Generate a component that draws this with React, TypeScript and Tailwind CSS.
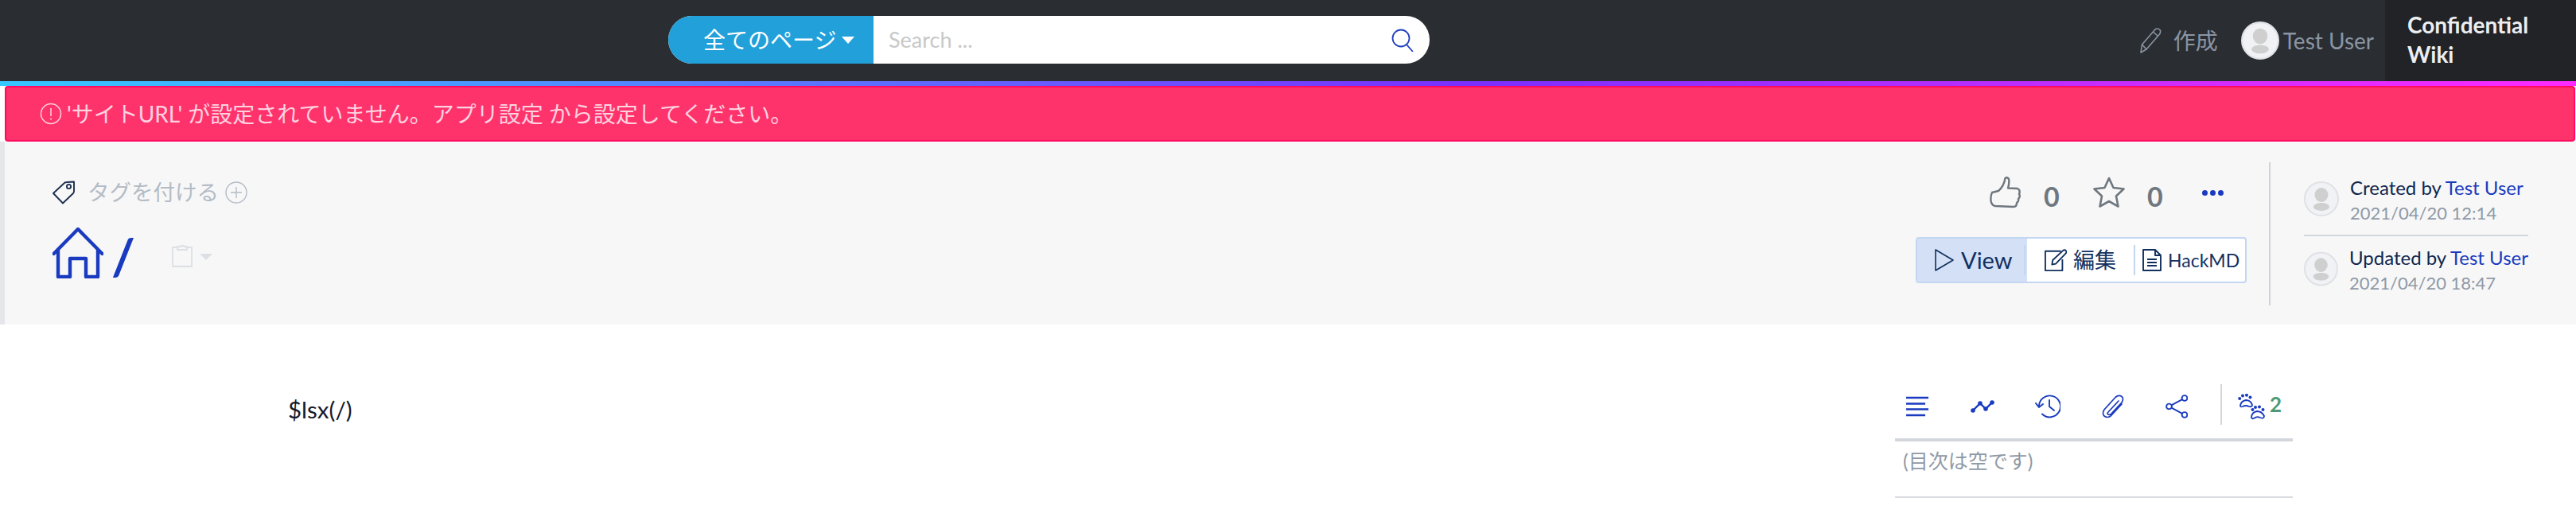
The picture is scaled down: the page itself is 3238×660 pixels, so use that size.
import React from "react";

const font = { fontFamily: "Lato, 'Noto Sans CJK JP', sans-serif" };

function Avatar({ className }: { className: string }) {
  return (
    <svg viewBox="0 0 44 44" className={className}>
      <circle cx="22" cy="22" r="21" fill="#f1f2f5" stroke="#dfe1e5" strokeWidth="2" />
      <ellipse cx="22" cy="17" rx="8.5" ry="9" fill="#cfcfcf" />
      <ellipse cx="22" cy="32" rx="10" ry="5" fill="#cfcfcf" />
    </svg>
  );
}

export default function App() {
  return (
    <div className="w-[3238px] h-[660px] overflow-hidden bg-white" style={font}>
      <nav className="h-[102px] bg-[#2a2d32] flex items-stretch">
        <div className="ml-[840px] mt-[20px] h-[60px] w-[957px] flex rounded-full overflow-hidden bg-white">
          <div className="w-[258px] bg-[#22a0d9] text-white text-[28px] flex items-center pl-[44px] gap-[7px] shrink-0 whitespace-nowrap">
            全てのページ
            <span className="w-0 h-0 border-x-[8px] border-t-[9px] border-x-transparent border-t-white"></span>
          </div>
          <div className="flex-1 flex items-center pl-[19px] pr-[20px] text-[27px] text-[#c8c8c8]">
            <span>Search ...</span>
            <svg viewBox="0 0 28 29" className="ml-auto w-[28px] h-[29px]" fill="none" stroke="#1f3fbf" strokeWidth="1.8">
              <circle cx="12" cy="12" r="10.5" />
              <path d="M19 20 L27 29" />
            </svg>
          </div>
        </div>
        <div className="ml-auto flex items-center text-[#8a95a3] text-[28px]">
          <svg viewBox="0 0 28 34" className="w-[28px] h-[34px] mr-[15px]" fill="none" stroke="#8a95a3" strokeWidth="1.6" strokeLinejoin="round">
            <path d="M2 32 L3.5 22 L20 3 Q23 0.8 26 3.5 Q27.5 6 25.5 9 L9 28 Z M3.5 22 L9 28 M17.5 6 L23.5 11.5" />
          </svg>
          <span>作成</span>
          <Avatar className="w-[48px] h-[48px] ml-[29px]" />
          <span className="ml-[5px]">Test User</span>
        </div>
        <div className="ml-[14px] w-[240px] bg-[#212327] text-[#eceef1] font-bold text-[28px] leading-[37px] pl-[28px] pt-[13px]">
          Confidential<br />Wiki
        </div>
      </nav>
      <div className="h-[6px] bg-[linear-gradient(90deg,#36c8ff_0%,#7a2fff_57%,#ff2aff_100%)]"></div>
      <div className="ml-[6px] mr-[1px] h-[70px] bg-[#ff336b] border-2 border-[#ff0a5e] rounded-[4px] flex items-center pl-[42px] text-[#ffd2e0] text-[28px] whitespace-nowrap">
        <svg viewBox="0 0 28 28" className="w-[28px] h-[28px] mr-[6px]" fill="none" stroke="#ffd2e0" strokeWidth="1.5">
          <circle cx="14" cy="14" r="12.5" />
          <path d="M14 7 V17 M14 19.5 V21.5" />
        </svg>
        <span>'サイトURL' が設定されていません。アプリ設定 から設定してください。</span>
      </div>

      <header className="h-[230px] bg-[#f7f7f7] border-l-[6px] border-[#e4e6ea] flex">
        <div className="pl-[60px] pt-[48px]">
          <div className="flex items-center h-[32px] text-[#b4bcc6] text-[27.5px]">
            <svg viewBox="0 0 28 30" className="w-[28px] h-[30px] mr-[16px]" fill="none" stroke="#1c2f50" strokeWidth="1.9" strokeLinejoin="round">
              <path d="M1 16 L15 3 Q16 2 18 2 L27 1.5 L27 13 Q27 15 26 16 L13 28.5 Z" />
              <circle cx="20.5" cy="7.5" r="2.6" />
            </svg>
            <span>タグを付ける</span>
            <svg viewBox="0 0 28 28" className="w-[28px] h-[28px] ml-[8px]" fill="none" stroke="#b4bcc6" strokeWidth="1.4">
              <circle cx="14" cy="14" r="13" />
              <path d="M14 7 V21 M7 14 H21" />
            </svg>
          </div>
          <div className="flex items-start mt-[28px]">
            <svg viewBox="0 0 64 64" className="w-[64px] h-[64px]" fill="none" stroke="#1a3bbf" strokeWidth="4.4" strokeLinecap="round" strokeLinejoin="round">
              <path d="M1.5 33 L32 2 L62.5 33 M7 28 V62 H22 V39 H42 V62 H57 V28" />
            </svg>
            <span className="text-[#1a3bbf] text-[64px] font-bold leading-[80px] ml-[10px] w-[30px] -mt-[4px]">/</span>
            <svg viewBox="0 0 26 28" className="w-[26px] h-[28px] ml-[46px] mt-[22px]" fill="none" stroke="#dcdfe4" strokeWidth="1.8">
              <path d="M7 3 H1 V27 H25 V3 H19 M7 6 V2 H11 L12 1 H15 L16 2 H19 V6 Z" />
            </svg>
            <span className="ml-[9px] mt-[33px] w-0 h-0 border-x-[8px] border-t-[8px] border-x-transparent border-t-[#dcdfe4]"></span>
          </div>
        </div>

        <div className="ml-auto flex flex-col items-end">
          <div className="flex items-center h-[40px] mt-[44px] mr-[29px] text-[#6f777f] font-bold text-[34px]">
            <svg viewBox="0 0 40 40" className="w-[40px] h-[40px]" fill="none" stroke="#6f777f" strokeWidth="2.4" strokeLinejoin="round">
              <path d="M3 20 Q1 24 1.5 30 Q2 36 7 37 L30 38 Q34 38 34 33 Q37 31 36 28 Q39 25 37 22 Q39 17 35 15 L23 14.5 Q25 8 24 3 Q22 0 19.5 2 Q18 12 11 18 Q7 19 3 20 Z" />
            </svg>
            <span className="ml-[28px] w-[20px] mt-[8px]">0</span>
            <svg viewBox="0 0 40 40" className="w-[40px] h-[40px] ml-[42px]" fill="none" stroke="#6f777f" strokeWidth="2.6" strokeLinejoin="round">
              <path d="M20 2 L25.5 14 L38.5 15.5 L29 24.5 L31.5 37.5 L20 31 L8.5 37.5 L11 24.5 L1.5 15.5 L14.5 14 Z" />
            </svg>
            <span className="ml-[28px] w-[20px] mt-[8px]">0</span>
            <span className="ml-[49px] flex gap-[3px]">
              <span className="w-[7px] h-[7px] rounded-full bg-[#1a3bbf]"></span>
              <span className="w-[7px] h-[7px] rounded-full bg-[#1a3bbf]"></span>
              <span className="w-[7px] h-[7px] rounded-full bg-[#1a3bbf]"></span>
            </span>
          </div>
          <div className="mt-[36px] w-[416px] h-[58px] flex items-center border-2 border-[#c3d6f2] rounded-[4px] bg-white text-[#11305f] overflow-hidden">
            <div className="w-[138px] h-full bg-[#d3e0f5] flex items-center pl-[22px] text-[29px] shrink-0">
              <svg viewBox="0 0 24 30" className="w-[24px] h-[30px] mr-[9px]" fill="none" stroke="#11305f" strokeWidth="1.6" strokeLinejoin="round">
                <path d="M1 2 V28 L23 15 Z" />
              </svg>
              <span>View</span>
            </div>
            <div className="w-[2px] h-[38px] bg-[#c3d6f2] -ml-[4px] shrink-0"></div>
            <div className="w-[136px] flex items-center pl-[24px] text-[27px] shrink-0">
              <svg viewBox="0 0 30 30" className="w-[28px] h-[28px] mr-[8px] shrink-0" fill="none" stroke="#11305f" strokeWidth="2" strokeLinejoin="round">
                <path d="M22 3 H1 V29 H24 V14 M10 21 L11 15 L25 2 Q27 0.5 29 2.5 Q30 4.5 28.5 6 L15 20 Z" />
              </svg>
              <span className="whitespace-nowrap">編集</span>
            </div>
            <div className="w-[2px] h-[38px] bg-[#c3d6f2] shrink-0"></div>
            <div className="flex items-center pl-[9px] text-[23px]">
              <svg viewBox="0 0 24 28" className="w-[24px] h-[28px] mr-[8px] shrink-0" fill="none" stroke="#11305f" strokeWidth="1.9" strokeLinejoin="round">
                <path d="M1 1 H16 L23 8 V27 H1 Z M16 1 V8 H23 M6 13 H18 M6 17 H18 M6 21 H18" />
              </svg>
              <span>HackMD</span>
            </div>
          </div>
        </div>

        <div className="w-[2px] h-[180px] mt-[26px] ml-[28px] bg-[#cfd3d9]"></div>

        <div className="ml-[42px] mr-[60px] w-[282px] mt-[48px] shrink-0">
          <div className="flex h-[62px]">
            <Avatar className="w-[44px] h-[44px] mt-[2px]" />
            <div className="ml-[14px] whitespace-nowrap">
              <div className="text-[24px] leading-[32px] -mt-[6px] text-[#11264d]">Created by <span className="text-[#1a3bbf]">Test User</span></div>
              <div className="text-[22px] leading-[30px] text-[#8f99a6] mt-[1px]">2021/04/20 12:14</div>
            </div>
          </div>
          <div className="h-[2px] bg-[#d3d7dc] mt-[7px]"></div>
          <div className="flex h-[62px] mt-[18px]">
            <Avatar className="w-[44px] h-[44px] mt-[1px]" />
            <div className="ml-[14px] whitespace-nowrap">
              <div className="text-[24px] leading-[32px] -mt-[7px] text-[#11264d]">Updated by <span className="text-[#1a3bbf]">Test User</span></div>
              <div className="text-[22px] leading-[30px] text-[#8f99a6] mt-[1px]">2021/04/20 18:47</div>
            </div>
          </div>
        </div>
      </header>

      <main className="flex">
        <div className="ml-[362px] mt-[89px] text-[29.5px] leading-[36px] text-[#15192a]">$lsx(/)</div>
        <aside className="ml-auto mr-[356px] w-[500px] mt-[75px]">
          <div className="h-[51px] flex items-center text-[#1a3bbf]">
            <div className="flex items-center pl-[14px] mt-[5px]">
              <svg viewBox="0 0 28 26" className="w-[28px] h-[26px]" fill="none" stroke="currentColor" strokeWidth="2.4">
                <path d="M0 2 H28 M0 9.5 H24 M0 16.5 H28 M0 24 H24" />
              </svg>
              <svg viewBox="0 0 30 16" className="w-[30px] h-[16px] ml-[53px]" fill="none" stroke="currentColor" strokeWidth="2.4">
                <path d="M3 13 L12 4 L19 11 L27 3" />
                <g fill="currentColor" stroke="none">
                  <circle cx="3" cy="13" r="2.8" /><circle cx="12" cy="4" r="2.8" /><circle cx="19" cy="11" r="2.8" /><circle cx="27" cy="3" r="2.8" />
                </g>
              </svg>
              <svg viewBox="0 0 32 30" className="w-[32px] h-[30px] ml-[51px]" fill="none" stroke="currentColor" strokeWidth="1.9" strokeLinecap="round">
                <path d="M5 15 A13.5 13.5 0 1 1 9 24.5 M1 11 L5 16 L10 12 M18 7 V15 L24 20" />
              </svg>
              <svg viewBox="0 0 28 30" className="w-[28px] h-[30px] ml-[52px]" fill="none" stroke="currentColor" strokeWidth="1.7" strokeLinecap="round">
                <path d="M21 8 L8 22 Q6 24 8 25 Q10 26 12 24 L25 10 Q28 5 25 2.5 Q21 0 17 3.5 L3 19 Q0 24 3 27 Q7 30 11 27 L25 12" />
              </svg>
              <svg viewBox="0 0 28 30" className="w-[28px] h-[30px] ml-[52px]" fill="none" stroke="currentColor" strokeWidth="1.9">
                <circle cx="4.5" cy="15" r="3.4" /><circle cx="24" cy="4.5" r="3.4" /><circle cx="24" cy="25.5" r="3.4" />
                <path d="M7.5 13.4 L21 6.2 M7.5 16.6 L21 23.8" />
              </svg>
            </div>
            <div className="w-[2px] h-[51px] bg-[#d3d7dc] ml-[41px]"></div>
            <div className="flex items-center mt-[5px]">
              <svg viewBox="0 0 34 33" className="w-[34px] h-[33px] ml-[20px]" fill="none" stroke="currentColor" strokeWidth="1.8" strokeLinejoin="round">
                <path d="M3 15 Q4 9 10 8 Q16 8 18 14 Q18 17 14 16 Q10 14 6 16 Q3 17 3 15 Z" />
                <path d="M17 29 Q18 23 24 22 Q30 22 33 28 Q33 32 28 30 Q24 28 20 31 Q17 32 17 29 Z" />
                <g fill="currentColor" stroke="none">
                  <circle cx="2.2" cy="6" r="2" /><circle cx="6" cy="2.5" r="2" /><circle cx="11" cy="1.8" r="2" /><circle cx="15.5" cy="4.5" r="2" />
                  <circle cx="18.5" cy="20" r="2" /><circle cx="22" cy="17" r="2" /><circle cx="27" cy="16.5" r="2" /><circle cx="31.5" cy="20" r="2" />
                </g>
              </svg>
              <span className="ml-[6px] text-[#4f9a76] font-bold text-[26px] -mt-[5px]">2</span>
            </div>
          </div>
          <div className="h-[4px] bg-[#d3d7dc] mt-[17px]"></div>
          <div className="h-[71px] border-b-2 border-[#d8dbdf] pl-[10px] pt-[8px] text-[25px] leading-[32px] text-[#8f99a6]">(目次は空です)</div>
        </aside>
      </main>
    </div>
  );
}
